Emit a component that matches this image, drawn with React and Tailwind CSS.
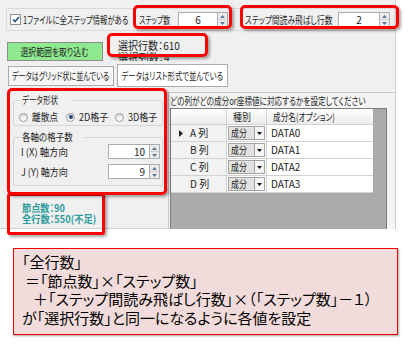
import React, { useLayoutEffect, useRef, useState } from "react";

// squeezes a label horizontally to the width it has in the original dialog
// (the dialog font has much narrower kana than Noto Sans CJK)
function Fit({ w, center = false, children }) {
  const ref = useRef(null);
  const [s, setS] = useState(1);
  useLayoutEffect(() => {
    const measure = () => {
      const el = ref.current;
      if (el && el.offsetWidth) setS(Math.min(1, w / el.offsetWidth));
    };
    measure();
    if (document.fonts) document.fonts.ready.then(measure);
  }, [w]);
  return (
    <span
      ref={ref}
      className={`inline-block whitespace-nowrap ${center ? "origin-center" : "origin-left"}`}
      style={{ transform: `scaleX(${s})` }}
    >
      {children}
    </span>
  );
}

// small up/down spinner used by the numeric boxes
function SpinBox({ value, inputW, right = false }) {
  return (
    <div className="flex shrink-0 h-[15px]">
      <div
        className={`${inputW} h-full bg-white border border-[#abadb3] flex items-center ${
          right ? "justify-end pr-[4px]" : "justify-center"
        }`}
      >
        {value}
      </div>
      <div className="w-[10px] h-full flex flex-col border border-l-0 border-[#abadb3] bg-[#ececec]">
        <div className="flex-1 flex items-center justify-center border-b border-[#cfcfcf]">
          <svg width="5" height="3" viewBox="0 0 5 3">
            <path d="M0 3 L2.5 0 L5 3Z" fill="#5f7896" />
          </svg>
        </div>
        <div className="flex-1 flex items-center justify-center">
          <svg width="5" height="3" viewBox="0 0 5 3">
            <path d="M0 0 L2.5 3 L5 0Z" fill="#5f7896" />
          </svg>
        </div>
      </div>
    </div>
  );
}

function Radio({ checked, label, w, tw }) {
  return (
    <div className={`flex items-center ${w}`}>
      <div className="w-[9px] h-[9px] shrink-0 rounded-full border border-[#9c9c9c] bg-gradient-to-b from-[#dedede] to-white flex items-center justify-center">
        {checked && <div className="w-[4px] h-[4px] rounded-full bg-[#24456e]" />}
      </div>
      <span className="ml-[4px]">
        <Fit w={tw}>{label}</Fit>
      </span>
    </div>
  );
}

const rows = [
  { key: "A", name: "DATA0" },
  { key: "B", name: "DATA1" },
  { key: "C", name: "DATA2" },
  { key: "D", name: "DATA3" },
];

export default function App() {
  return (
    <div className="relative w-[409px] h-[346px] overflow-hidden bg-white text-[#1e1e1e] font-['Noto_Sans_CJK_JP',sans-serif] [font-feature-settings:'palt']">
      {/* app window */}
      <div className="w-[396px] h-[229px] bg-[#f0f0f0] border-r border-b border-[#d0d0d0] text-[10px] leading-[12px]">
        {/* top options row */}
        <div className="pt-[8px] pl-[6px]">
          <div className="h-[23px] w-[389px] border border-[#dadada] flex items-center">
            <div className="ml-[3px] w-[11px] h-[11px] shrink-0 border border-[#8f8f8f] bg-white flex items-center justify-center">
              <svg width="8" height="7" viewBox="0 0 8 7">
                <path d="M1 3.5 L3 5.5 L7 1" stroke="#2a4f86" strokeWidth="1.6" fill="none" />
              </svg>
            </div>
            <span className="ml-[2px] w-[116px] shrink-0">
              <Fit w={105}>1ファイルに全ステップ情報がある</Fit>
            </span>
            <span className="w-[39px] shrink-0">
              <Fit w={31}>ステップ数</Fit>
            </span>
            <SpinBox inputW="w-[40px]" value="6" />
            <span className="ml-[17px] w-[93px] shrink-0">
              <Fit w={87}>ステップ間読み飛ばし行数</Fit>
            </span>
            <SpinBox inputW="w-[42px]" value="2" />
          </div>
        </div>

        {/* import button + selection info */}
        <div className="h-[30px] flex overflow-hidden">
          <div className="ml-[7px] mt-[11px] w-[96px] h-[19px] shrink-0 bg-[#8fe98f] border border-[#8c8c8c] flex items-center justify-center">
            <Fit w={68} center>選択範囲を取り込む</Fit>
          </div>
          <div className="ml-[15px] mt-[8px] text-[11px] leading-[12px]">
            <div>
              <Fit w={62}>選択行数：610</Fit>
            </div>
            <div>
              <Fit w={52}>選択列数：4</Fit>
            </div>
          </div>
        </div>

        {/* tabs */}
        <div className="h-[27px] flex items-end">
          <div className="ml-[8px] mb-[2px] w-[106px] h-[20px] border border-[#acacac] bg-[#f6f6f6] flex items-center justify-center">
            <Fit w={97} center>データはグリッド状に並んでいる</Fit>
          </div>
          <div className="ml-[3px] mb-[1px] w-[111px] h-[23px] border border-[#acacac] bg-white flex items-center justify-center">
            <Fit w={102} center>データはリスト形式で並んでいる</Fit>
          </div>
        </div>

        {/* tab content */}
        <div className="h-[141px] flex">
          {/* left: grid settings */}
          <div className="ml-[13px] w-[150px] shrink-0">
            <fieldset className="mt-[6px] border border-[#d6d6d6] rounded-[2px] pb-[2px]">
              <legend className="ml-[7px] px-[1px]">
                <Fit w={36}>データ形状</Fit>
              </legend>
              <div className="mt-[5px] pl-[5px] flex items-center h-[12px]">
                <Radio w="w-[47px]" tw={26} label="離散点" />
                <Radio w="w-[49px]" tw={29} checked label="2D格子" />
                <Radio w="w-[45px]" tw={29} label="3D格子" />
              </div>
            </fieldset>

            <fieldset className="mt-[5px] border border-[#d6d6d6] rounded-[2px] pb-[6px]">
              <legend className="ml-[7px] px-[1px]">
                <Fit w={51}>各軸の格子数</Fit>
              </legend>
              <div className="mt-[1px] flex items-center pl-[7px]">
                <span className="w-[87px] shrink-0">
                  <Fit w={47}>I (X) 軸方向</Fit>
                </span>
                <SpinBox inputW="w-[42px]" value="10" right />
              </div>
              <div className="mt-[5px] flex items-center pl-[7px]">
                <span className="w-[87px] shrink-0">
                  <Fit w={47}>J (Y) 軸方向</Fit>
                </span>
                <SpinBox inputW="w-[42px]" value="9" right />
              </div>
            </fieldset>

            <div className="ml-[8px] mt-[1px] leading-[10px]">---</div>
            <div className="ml-[9px] mt-[5px] text-[#2b9b9b] font-bold leading-[11px]">
              <div>
                <Fit w={43}>節点数：90</Fit>
              </div>
              <div>
                <Fit w={74}>全行数：550(不足)</Fit>
              </div>
            </div>
          </div>

          {/* right: column assignment */}
          <div className="ml-[5px] mt-[4px] w-[228px] flex flex-col border border-b-0 border-[#c9c9c9] bg-[#f4f4f4]">
            <div className="pl-[1px] pt-[2px]">
              <Fit w={196}>どの列がどの成分or座標値に対応するかを設定してください</Fit>
            </div>
            <div className="ml-[1px] mt-[1px] w-[217px] flex-1 bg-[#ababab] border border-b-0 border-[#7c7c7c]">
              <div className="flex h-[16px]">
                <div className="w-[56px] bg-gradient-to-b from-white to-[#ececec] border-r border-b border-[#d2d2d2]" />
                <div className="w-[40px] pl-[6px] flex items-center bg-gradient-to-b from-white to-[#ececec] border-r border-b border-[#d2d2d2]">
                  <Fit w={18}>種別</Fit>
                </div>
                <div className="w-[106px] pl-[6px] flex items-center bg-gradient-to-b from-white to-[#ececec] border-b border-[#d2d2d2]">
                  <Fit w={62}>成分名(オプション)</Fit>
                </div>
              </div>
              {rows.map((r, i) => (
                <div key={r.key} className="flex h-[17px]">
                  <div className="w-[56px] flex items-center bg-[#f2f2f2] border-r border-b border-[#d2d2d2]">
                    <div className="w-[19px] flex justify-center">
                      {i === 0 && (
                        <svg width="4" height="7" viewBox="0 0 4 7">
                          <path d="M0 0 L4 3.5 L0 7Z" fill="#222" />
                        </svg>
                      )}
                    </div>
                    <span>{r.key} 列</span>
                  </div>
                  <div className="w-[40px] flex items-stretch bg-white border-r border-b border-[#d2d2d2] p-[1px]">
                    <div className="flex-1 flex items-center pl-[2px] bg-[#e2e2e2] border border-[#a3a3a3]">
                      <Fit w={16}>成分</Fit>
                    </div>
                    <div className="w-[10px] flex items-center justify-center bg-[#f5f5f5] border border-l-0 border-[#a3a3a3]">
                      <svg width="5" height="3" viewBox="0 0 5 3">
                        <path d="M0 0 L2.5 3 L5 0Z" fill="#111" />
                      </svg>
                    </div>
                  </div>
                  <div className="w-[106px] pl-[4px] flex items-center bg-white border-b border-[#d2d2d2]">
                    {r.name}
                  </div>
                </div>
              ))}
            </div>
          </div>
        </div>
      </div>

      {/* explanation note */}
      <div className="ml-[13px] mt-[19px] w-[385px] h-[87px] border border-[#f20000] bg-[#f2dcdb] shadow-[1px_1px_2px_rgba(0,0,0,0.35)] pt-[4px] pl-[8px] text-[15px] leading-[18.5px] text-black">
        <div>「全行数」</div>
        <div className="pl-[3px]">＝「節点数」×「ステップ数」</div>
        <div className="pl-[11px]">＋「ステップ間読み飛ばし行数」×（「ステップ数」－１）</div>
        <div>が「選択行数」と同一になるように各値を設定</div>
      </div>

      {/* red highlight annotations drawn over the screenshot */}
      <div className="absolute left-[133px] top-[5px] w-[99px] h-[24px] border-[3px] border-[#ff0000] rounded-[5px] shadow-[2px_2px_3px_rgba(0,0,0,0.35)]" />
      <div className="absolute left-[240px] top-[5px] w-[159px] h-[24px] border-[3px] border-[#ff0000] rounded-[5px] shadow-[2px_2px_3px_rgba(0,0,0,0.35)]" />
      <div className="absolute left-[107px] top-[33px] w-[101px] h-[24px] border-[3px] border-[#ff0000] rounded-[5px] shadow-[2px_2px_3px_rgba(0,0,0,0.35)]" />
      <div className="absolute left-[7px] top-[193px] w-[98px] h-[42px] border-[3px] border-[#ff0000] rounded-[3px] shadow-[2px_2px_3px_rgba(0,0,0,0.35)]" />
      <div className="absolute left-[7px] top-[88px] w-[160px] h-[107px] border-[3px] border-[#ff0000] rounded-[5px] shadow-[2px_2px_3px_rgba(0,0,0,0.35)]" />
    </div>
  );
}
